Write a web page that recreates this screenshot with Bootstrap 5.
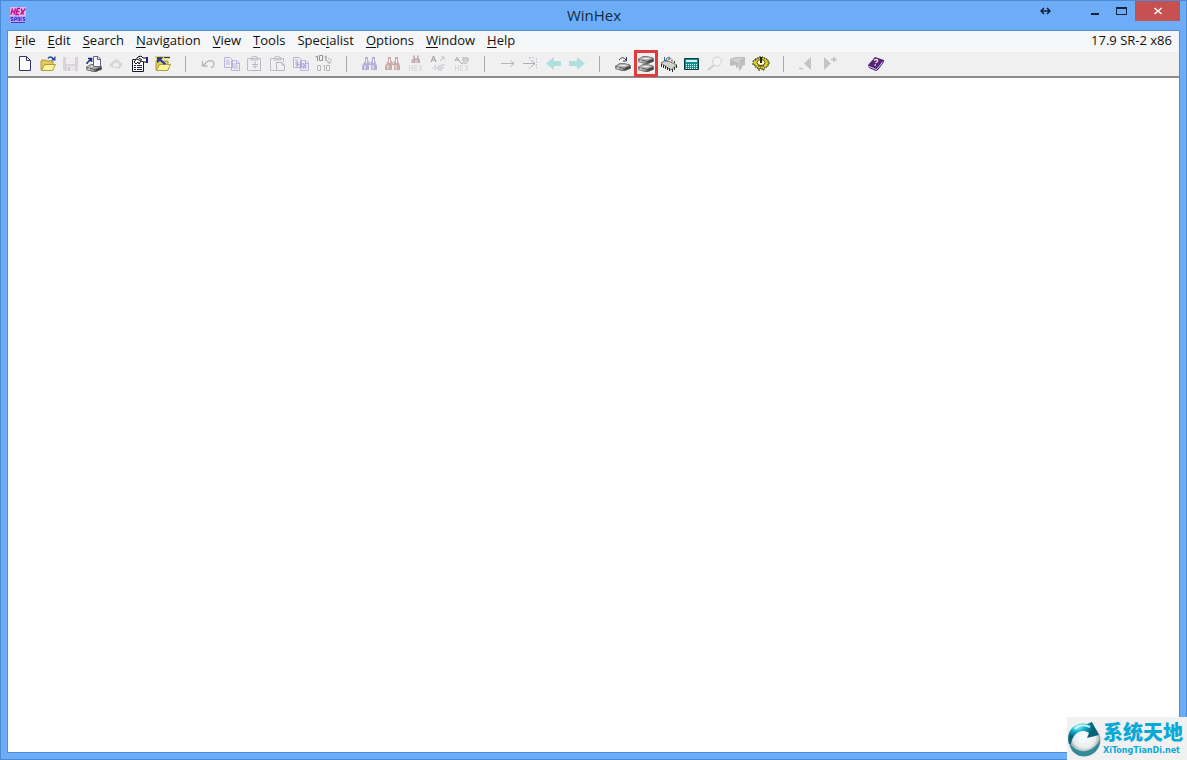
<!DOCTYPE html>
<html lang="en">
<head>
<meta charset="utf-8">
<meta name="viewport" content="width=device-width, initial-scale=1">
<title>WinHex</title>
<link href="https://cdn.jsdelivr.net/npm/bootstrap@5.3.0/dist/css/bootstrap.min.css" rel="stylesheet">
<style>
body{font-family:"Open Sans","Noto Sans",sans-serif;font-size:13px;line-height:20px;color:#111}
.win{background:#6dacf7;border:1px solid #4a8bd4;padding:0 7px 7px}
.titlebar{height:29px;margin-right:-1px}
.app-icon{margin:6px 0 0 2px}
.win-title{font-size:15px;line-height:28px;color:#132b45}
.ctl,.tool{background:none;border:0;padding:0;border-radius:0}
.ctl{width:27px;height:20px;display:flex;align-items:center;justify-content:center;color:#0f2440}
.ctl-move{margin-right:22px}
.ctl-close{width:45px;background:#c75050;color:#fff}
.client{border:1px solid #4c90dc;margin:0 -1px -1px;background:#fff}
.menubar{background:#f5f6f7;height:20px;padding:0 7px 2px 1px}
.menubar a{color:#111;text-decoration:none;padding:0 6px}
.menubar u{text-underline-offset:2px}
.toolstrip{background:#f0f0f0;height:27px;padding:0 5px;border-top:1px solid #fafafa;border-bottom:2px solid #8c8c8c}
.tool{width:23px;height:24px;padding:0 3px 0 4px;display:flex;align-items:center}
.tool svg{width:16px;height:16px;display:block;overflow:visible;fill:none;stroke-width:1}
.rule{width:23px;height:16px;display:flex;justify-content:center}
.rule::before{content:"";width:1px;background:#a9a9ab}
.rule-blank::before{background:none}
.picked{position:relative}
.picked::after{content:"";position:absolute;inset:-2px -1px -1px 0;border:3px solid #e03c3c}
.brand{position:absolute;right:-1px;bottom:-1px;width:120px;height:43px;background:#f1f1f2;gap:1px}
.brand-cn{font:900 20px/24px "Noto Sans CJK SC",sans-serif;color:#08a9d6;white-space:nowrap}
.brand-en{font:bold 8px/14px "DejaVu Sans",sans-serif;color:#08a9d6;white-space:nowrap}
</style>
</head>
<body>
<svg width="0" height="0" class="position-absolute" aria-hidden="true">
<defs>
<radialGradient id="aqua" cx=".3" cy=".2"><stop stop-color="#a5f0f6"/><stop offset=".5" stop-color="#14b0cc"/><stop offset="1" stop-color="#06647a"/></radialGradient>
<radialGradient id="pearl" cx=".5" cy=".4"><stop stop-color="#fff"/><stop offset=".7" stop-color="#e6ecee"/><stop offset="1" stop-color="#8fa5a8"/></radialGradient>
<symbol id="disk" viewBox="0 0 16 8"><path d="M0 3 5 0H9L15 1.500 16 3V5.500L10 8H7L0 6Z" fill="#666"/><path d="M1 3 5.500.7H9L14.500 2.200 9 4.800Z" fill="#c9c9c9"/><path d="M0 3.800 8 5.500V7.500L0 5.800Z" fill="#9a9a9a"/><ellipse cx="8" cy="2.500" rx="3.300" ry="1.200" fill="#f2f2f2" stroke="#888" stroke-width=".6"/><path d="M10 6.500 15 4.300" stroke="#2d2d2d" stroke-width="1.200"/><path d="M2 5H4" stroke="#eee"/></symbol>
<symbol id="folder" viewBox="0 0 16 16"><path d="M1 14V5L2 4H6L7 5H13V14Z" fill="#e2ca5a" stroke="#b09a40"/><path d="M1.500 14.500 4.500 8.500H15.500L12.500 14.500Z" fill="#fbf39a" stroke="#b09d40"/></symbol>
<symbol id="bino" viewBox="0 0 16 16"><path d="M3 1H6V4L7 6V14H0V10L3 5ZM10 1H13V5L15 10V14H9V6L10 4ZM6 6H10V9H6Z" fill="currentColor"/><path d="M4.500 3V7M3 9V13M11.500 3V7M11 9V13M7.500 7H9" stroke="#f4f4f8"/></symbol>
<symbol id="pages" viewBox="0 0 16 16"><path d="M.5 1.500H6L8.500 4V11.500H.5ZM7.500 4.500H13L15.500 7V14.500H7.500ZM2 4H5M2 6H6M2 8H6M9 8H13M9 10H14M9 12H14M12.500 5V7.500H15" fill="none" stroke="#bbb4df"/></symbol>
<symbol id="clip" viewBox="0 0 16 16"><path d="M.5 2.500H13.500V6M.5 2.500V14.500H7M4 4H11V2L9 .5H6L4 2Z" fill="none" stroke="#c0bdc8"/></symbol>
</defs>
</svg>

<main class="win d-flex flex-column min-vh-100 position-relative">
<header class="titlebar d-flex position-relative">
  <svg class="app-icon" width="16" height="16" viewBox="0 0 16 16" role="img" aria-label="WinHex"><path d="M0 0H16V9H0Z" fill="#e2b6e8"/><path d="M0 9H16V16H0Z" fill="#b4a2f4"/><path d="M2.500 1.500 1 7.500M5.500 1.500 4 7.500M2 4.500H5M10 1.500H7.500L6 7.500H9M7 4.500H9.500M11 1.500 13.500 7.500M15.500 1.500 10.500 7.500" stroke="#b8128c" stroke-width="1.400" fill="none"/><path d="M3 10.500H1V12H3V13.500H1M4.500 14V10.500H6.500V12.500H5M8 14V10.500H9.500V14M11 10V14M15 10.500H13V12H15V13.500H13M1 15.500H15" stroke="#3a2cc0" stroke-width=".9" fill="none"/></svg>
  <h1 class="win-title position-absolute start-50 translate-middle-x fw-normal m-0">WinHex</h1>
  <div class="d-flex ms-auto">
    <button class="ctl ctl-move" aria-label="Move"><svg width="11" height="8" viewBox="0 0 11 8" fill="none" stroke="currentColor" stroke-width="1.500"><path d="M1 4H10M4 1 1 4 4 7M7 1 10 4 7 7"/></svg></button>
    <button class="ctl" aria-label="Minimize"><svg width="10" height="8" viewBox="0 0 10 8"><path d="M1 6H9V8H1Z" fill="currentColor"/></svg></button>
    <button class="ctl" aria-label="Maximize"><svg width="11" height="8" viewBox="0 0 11 8"><path d="M0 0H11V8H0ZM1 2V7H10V2Z" fill="currentColor" fill-rule="evenodd"/></svg></button>
    <button class="ctl ctl-close" aria-label="Close"><svg width="8" height="8" viewBox="0 0 8 8"><path d="M.5 1 7.500 7M7.500 1 .5 7" stroke="currentColor" stroke-width="1.500"/></svg></button>
  </div>
</header>
<section class="client flex-grow-1">
<nav class="menubar d-flex align-items-center">
  <a href="#"><u>F</u>ile</a><a href="#"><u>E</u>dit</a><a href="#"><u>S</u>earch</a><a href="#"><u>N</u>avigation</a><a href="#"><u>V</u>iew</a><a href="#"><u>T</u>ools</a><a href="#">Spec<u>i</u>alist</a><a href="#"><u>O</u>ptions</a><a href="#"><u>W</u>indow</a><a href="#"><u>H</u>elp</a>
  <span class="ms-auto">17.9 SR-2 x86</span>
</nav>
<div class="toolstrip d-flex align-items-center" role="toolbar" aria-label="Tools">
  <button class="tool" aria-label="New"><svg viewBox="0 0 16 16"><path d="M2.500.5H9.500L13.500 4.500V14.500H2.500ZM9.500.5V4.500H13.500" fill="#fff" stroke="#34346c"/></svg></button>
  <button class="tool" aria-label="Open"><svg viewBox="0 0 16 16"><use href="#folder"/><path d="M8 2.500C9 .5 12 0 13 3" stroke="#2344ae" stroke-width="1.500"/><path d="M15.500 0V4.500H11Z" fill="#2344ae"/></svg></button>
  <button class="tool" aria-label="Save"><svg viewBox="0 0 16 16"><path d="M0 1H15V15H1L0 14Z" fill="#d8d4da"/><path d="M3 1H12V8H3Z" fill="#efedf0"/><path d="M4 10H12V15H4Z" fill="#e8e6e8"/><path d="M5 11H7V15H5Z" fill="#cfcbd0"/></svg></button>
  <button class="tool" aria-label="Open disk"><svg viewBox="0 0 16 16"><use href="#disk" y="8" width="16" height="8"/><path d="M7.500.5H12L14.500 3V10.500H7.500ZM11.500.5V3.500H14.500" fill="#f7f7ff" stroke="#62628e"/><path d="M1 8V7L5 3M2 2.500H5.500V6" stroke="#1c2f79" stroke-width="1.500"/></svg></button>
  <button class="tool" aria-label="Print"><svg viewBox="0 0 16 16"><path d="M0 9 4 5 13 7 13 9 10 13 2 11Z" fill="#d6d6d6"/><path d="M4 4 8 3 12 6 8 8Z" fill="#dcdcdc"/><ellipse cx="7" cy="9" rx="3" ry="2" fill="#f0f0f0"/></svg></button>
  <button class="tool" aria-label="Properties"><svg viewBox="0 0 16 16"><path d="M1 3.500H11.500V15.500H.5V3.500" fill="#fff" stroke="#15152c"/><path d="M2 9.500H4M5 9.500H10M2 11.500H4M5 11.500H10M2 13.500H4M5 13.500H10" stroke="#22224e"/><path d="M2 6 6 1 9 0 11 2H15V6H12L9 5 7 8 6 6 4 8Z" fill="#f9f9f9" stroke="#111"/><path d="M5 3 9 5M7 2 10 4" stroke="#111"/><path d="M14 1H16V7H14Z" fill="#272268"/></svg></button>
  <button class="tool" aria-label="Open folder"><svg viewBox="0 0 16 16"><use href="#folder"/><path d="M0 0H15V3H0Z" fill="#e9d45b"/><path d="M2 1H8L6.500 3.500 11 7.500 9.500 9 5 5 2 7Z" fill="#263f99"/><path d="M9 1.500H15" stroke="#263f99"/></svg></button>
  <span class="rule"></span>
  <button class="tool" aria-label="Undo"><svg viewBox="0 0 16 16"><path d="M1.500 5V10H6.500M2 9.500 6 6C9 3.500 13 5 13 8 13 10 12 11 10 12" stroke="#b9b5c4" stroke-width="1.300"/></svg></button>
  <button class="tool" aria-label="Copy"><svg viewBox="0 0 16 16"><use href="#pages"/></svg></button>
  <button class="tool" aria-label="Copy block"><svg viewBox="0 0 16 16"><use href="#clip"/><path d="M13.500 6V14.500H5M5 8.500H11M8 5V12M6 10 8 12 10 10" stroke="#b8b5c5"/></svg></button>
  <button class="tool" aria-label="Paste"><svg viewBox="0 0 16 16"><use href="#clip"/><path d="M6.500 6.500H12L14.500 9V14.500H6.500ZM12 6.500V9H14" stroke="#b7b4c2"/></svg></button>
  <button class="tool" aria-label="Copy hex"><svg viewBox="0 0 16 16"><use href="#pages"/><path d="M4 6V12M4 9H8M8 6V12M10 7 13 12M13 7 10 12" stroke="#a7a2c8"/></svg></button>
  <button class="tool" aria-label="Modify data"><svg viewBox="0 0 16 16"><g stroke="#929296"><path d="M-.5 1 1.500 0V5M3.500-.5H6.500V4.500H3.500ZM8.500 1 10 0V5"/></g><g stroke="#b7b7bb"><path d="M1.500 9.500H4.500V14.500H1.500ZM7 10 8.500 9.500V15M10.500 9.500H13.500V14.500H10.500ZM12 2.500C16 2 16 6 13 7M15 7H12V4"/></g></svg></button>
  <span class="rule"></span>
  <button class="tool" aria-label="Find text"><svg viewBox="0 0 16 16" color="#b4afd9"><use href="#bino"/></svg></button>
  <button class="tool" aria-label="Find hex"><svg viewBox="0 0 16 16" color="#cbaaaa"><use href="#bino"/></svg></button>
  <button class="tool" aria-label="Replace"><svg viewBox="0 0 16 16" color="#c0a1a5"><use href="#bino" x="3" y="-1" width="10" height="9"/><path d="M1.500 9V15M1.500 12H4.500M4.500 9V15M9 9.500H6.500V14.500H9M6.500 12H9M11 9 14 15M14 9 11 15" stroke="#dad7da"/></svg></button>
  <button class="tool" aria-label="Replace text"><svg viewBox="0 0 16 16"><path d="M0 6 2.500 0 5 6M1 4H4" stroke="#99979c"/><path d="M9 5 13 1M10 1H13V4M4 9V14M1 12H2M5 12H8M8 9V15M10 9V15M10 9H14M10 12H13" stroke="#c3c0ca"/></svg></button>
  <button class="tool" aria-label="Replace hex"><svg viewBox="0 0 16 16"><path d="M1 5 3 1 6 6M2 4H5M6 6 8 8 12 3M10 2H14V5M9 1V5M12 4C15 5 13 8 10 7" stroke="#aaa7b3"/><path d="M1.500 9V15M1.500 12H4.500M4.500 9V15M9 9.500H6.500V14.500H9M6.500 12H9M11 9 14 15M14 9 11 15" stroke="#dad7da"/></svg></button>
  <span class="rule"></span>
  <button class="tool" aria-label="Go to offset"><svg viewBox="0 0 16 16"><path d="M1 7.500H14M10.500 4.500 14 7.500 10.500 10.500" stroke="#b7b1bf"/></svg></button>
  <button class="tool" aria-label="Go to page"><svg viewBox="0 0 16 16"><path d="M0 7.500H12M8 4 12 7.500 8 11" stroke="#b0aaba"/><path d="M6.500 1V4M6.500 11V14M13.500 2V14M6 1.500H11" stroke="#cdc9d3" stroke-dasharray="2 1"/></svg></button>
  <button class="tool" aria-label="Back"><svg viewBox="0 0 16 16"><path d="M0 7.500 8 1V5H15V10H8V14Z" fill="#aee0de"/></svg></button>
  <button class="tool" aria-label="Forward"><svg viewBox="0 0 16 16"><path d="M16 7.500 8 1V5H0V10H8V14Z" fill="#aee0de"/></svg></button>
  <span class="rule"></span>
  <button class="tool" aria-label="Disk image"><svg viewBox="0 0 16 16"><use href="#disk" y="7" width="16" height="8"/><path d="M4 4C6 1 9 1 11 4M11.500 1V5H8" stroke="#29364f"/></svg></button>
  <button class="tool picked" aria-label="Open disk"><svg viewBox="0 0 16 16"><use href="#disk" y="0" width="16" height="8"/><use href="#disk" y="8" width="16" height="8"/></svg></button>
  <button class="tool" aria-label="Open RAM"><svg viewBox="0 0 16 16"><path d="M0 7 5 4 16 9 10 14Z" fill="#d2d2c8" stroke="#77776f"/><path d="M.5 8V11M2.500 9V12M4.500 10V13M6.500 11V14M8.500 12V15M11.500 13V16M13.500 11V14M15.500 9V12M8 4V2M11 5.500V3.500M13.500 7V5" stroke="#2c2c2c"/><path d="M5 4C6 .5 9 .5 10 3M3.500 1V5H7" stroke="#4a688e"/></svg></button>
  <button class="tool" aria-label="Calculator"><svg viewBox="0 0 16 16"><path d="M.5 2.500H14.500V13.500H.5Z" fill="#128f93" stroke="#053c42"/><path d="M2 4H13V6H2Z" fill="#d7f2ef"/><path d="M2 8.500H13M2 10.500H13M2 12.500H13" stroke="#d8ffff" stroke-dasharray="1 1"/></svg></button>
  <button class="tool" aria-label="Analyze"><svg viewBox="0 0 16 16"><circle cx="10" cy="5.500" r="4.500" fill="#f3f3f3" stroke="#cfcfcf"/><path d="M7 9 1 14" stroke="#cecece" stroke-width="2"/></svg></button>
  <button class="tool" aria-label="Snapshot"><svg viewBox="0 0 16 16"><path d="M0 3 5 1H15V9L12 10V12L9 15V11L6 12V9L0 10Z" fill="#bdbdbd"/><path d="M1 4 6 2H13L9 5H2Z" fill="#cfcfcf"/><path d="M9 5V10M5 5.500H8" stroke="#d9d9d9"/></svg></button>
  <button class="tool" aria-label="Options"><svg viewBox="0 0 16 16"><path d="M2 3H4V2H6V1H10V2H12V3H14V5H16V9H14V11H12V12H11V14H9V12H7V14H5V12H4V11H2V9H0V5H2Z" fill="#d9d02c" stroke="#2e2d10" stroke-dasharray="2 1"/><ellipse cx="8" cy="6.500" rx="4" ry="3" fill="#fffccd" stroke="#57530f"/><path d="M8 1V7" stroke="#222" stroke-width="2"/><path d="M5 10H11" stroke="#444015"/></svg></button>
  <span class="rule"></span>
  <button class="tool" aria-label="Previous"><svg viewBox="0 0 16 16"><path d="M12 1V14L5 7.500Z" fill="#c4c4c4"/><path d="M0 12.500H4" stroke="#c4c4c4" stroke-width="1.500"/></svg></button>
  <button class="tool" aria-label="Next"><svg viewBox="0 0 16 16"><path d="M2 1V14L9 7.500Z" fill="#c4c4c4"/><path d="M9 3.500H15M12 1V6" stroke="#bdbdbd" stroke-width="1.500"/></svg></button>
  <span class="rule rule-blank"></span>
  <button class="tool" aria-label="Help"><svg viewBox="0 0 16 16"><path d="M0 9 7 1 16 4V6L10 14 8 15 1 12Z" fill="#51257c"/><path d="M1 10.500 8.500 13.500 15 5.500" stroke="#d6c9e4"/><path d="M6 4.500C8 2.500 11 4 9 6L7.500 7M6.500 9H8" stroke="#ffd4bd" stroke-width="1.400"/></svg></button>
</div>
</section>
<aside class="brand d-flex align-items-center">
  <svg width="35" height="38" viewBox="0 0 35 38" aria-hidden="true"><circle cx="17.500" cy="20" r="16" fill="url(#pearl)"/><path d="M2 24C-2 10 9 1 20 4L25 2 32 15 20 18 22 13C14 8 6 13 4 24Z" fill="url(#aqua)"/><path d="M3 23C10 35 25 34 33 20 33 33 21 38 13 36 7 34 3 30 3 23Z" fill="#348b96"/><path d="M8 9C13 4 19 5 23 7" stroke="#c5f6fa" stroke-width="2" fill="none"/></svg>
  <div><div class="brand-cn">系统天地</div><div class="brand-en">XiTongTianDi.net</div></div>
</aside>
</main>
<script src="https://cdn.jsdelivr.net/npm/bootstrap@5.3.0/dist/js/bootstrap.bundle.min.js"></script>
</body>
</html>
